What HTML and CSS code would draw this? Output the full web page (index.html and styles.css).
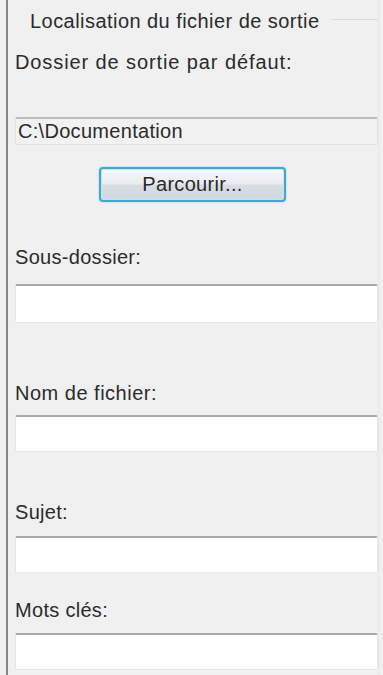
FILE: index.html
```html
<!DOCTYPE html>
<html lang="fr">
<head>
<meta charset="utf-8">
<title>Localisation du fichier de sortie</title>
<link rel="stylesheet" href="styles.css">
</head>
<body>
<div class="panel">
  <div class="group">
    <div class="legend"><span class="legend-text">Localisation du fichier de sortie</span><span class="legend-line"></span></div>
    <div class="label label-dossier">Dossier de sortie par défaut:</div>
    <div class="field field-readonly">C:\Documentation</div>
    <button class="browse" type="button">Parcourir...</button>
    <div class="label label-sous">Sous-dossier:</div>
    <div class="field field-sous"></div>
    <div class="label label-nom">Nom de fichier:</div>
    <div class="field field-nom"></div>
    <div class="label label-sujet">Sujet:</div>
    <div class="field field-sujet"></div>
    <div class="label label-mots">Mots clés:</div>
    <div class="field field-mots"></div>
  </div>
</div>
</body>
</html>
```

FILE: styles.css
```css
html, body {
  margin: 0;
  padding: 0;
  background: #f0f0f0;
  width: 383px;
  height: 675px;
  overflow: hidden;
}

body {
  font-family: "Liberation Sans", Arial, sans-serif;
  font-size: 20px;
  color: #2b2b2b;
}

.panel {
  margin-left: 6px;
  height: 675px;
  border-left: 2px solid #858585;
  padding-left: 7px;
  box-sizing: border-box;
}

.group {
  width: 364px;
  display: flex;
  flex-direction: column;
  border-right: 1px solid #e8e8e8;
  height: 675px;
  box-sizing: border-box;
}

.legend {
  display: flex;
  align-items: center;
  margin-top: 9px;
  height: 24px;
}

.legend-text {
  padding-left: 15px;
  line-height: 24px;
  white-space: nowrap;
  letter-spacing: 0.45px;
}

.legend-line {
  flex: 1;
  height: 1px;
  background: #dcdcdc;
  margin-left: 12px;
  align-self: flex-start;
  margin-top: 10px;
}

.label {
  line-height: 24px;
  height: 24px;
  white-space: nowrap;
  letter-spacing: 0.3px;
}

.label-dossier { margin-top: 17px; letter-spacing: 0.9px; }
.label-sous { margin-top: 43px; }
.label-nom { margin-top: 58px; letter-spacing: 0.5px; }
.label-sujet { margin-top: 48px; }
.label-mots { margin-top: 25px; }

.field {
  width: 363px;
  height: 37px;
  box-sizing: border-box;
  background: #fff;
  border: 1px solid #e6e6e6;
  border-top: 2px solid #a8a8a8;
  border-radius: 2px;
}

.field-readonly {
  margin-top: 43px;
  height: 28px;
  background: #f2f2f2;
  border-color: #e2e2e2;
  border-top-color: #bcbcbc;
  line-height: 24px;
  padding-left: 2px;
  letter-spacing: 0.3px;
}

.field-sous { margin-top: 15px; height: 39px; }
.field-nom { margin-top: 10px; }
.field-sujet { margin-top: 12px; }
.field-mots { margin-top: 11px; }

.browse {
  margin-top: 22px;
  margin-left: 84px;
  width: 187px;
  height: 35px;
  box-sizing: border-box;
  border: 2px solid #4aa3c8;
  border-radius: 4px;
  background: linear-gradient(#f6f8fa 0%, #e9edf0 48%, #d8dde2 52%, #d2d8dd 100%);
  box-shadow: 0 0 2px #7fd0e8, inset 0 0 0 1px #bfe6f3;
  font-family: "Liberation Sans", Arial, sans-serif;
  font-size: 20px;
  color: #2a2a2a;
  padding: 0;
  letter-spacing: 0.3px;
  align-self: flex-start;
}
```
